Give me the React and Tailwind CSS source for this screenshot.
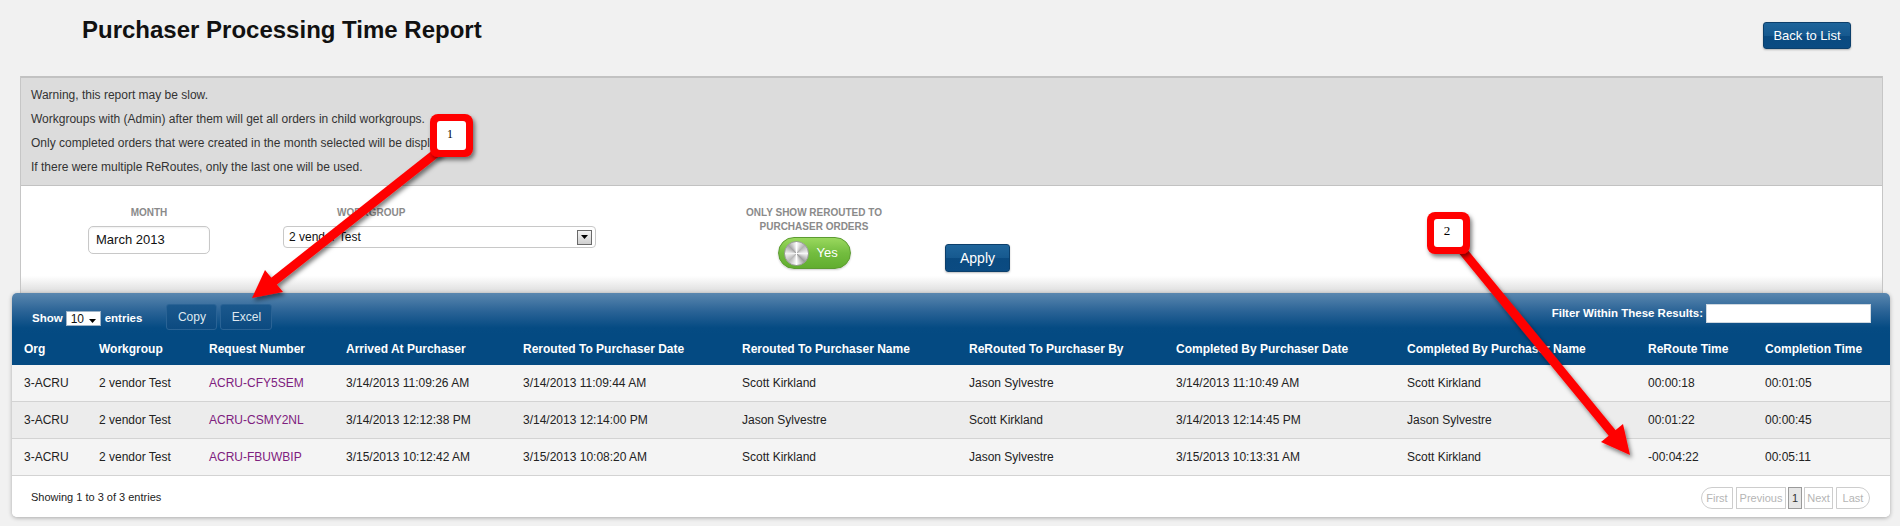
import React from 'react';

const cols = "grid grid-cols-[75px_110px_137px_177px_219px_227px_207px_231px_241px_117px_137px]";

const headers = [
  "Org",
  "Workgroup",
  "Request Number",
  "Arrived At Purchaser",
  "Rerouted To Purchaser Date",
  "Rerouted To Purchaser Name",
  "ReRouted To Purchaser By",
  "Completed By Purchaser Date",
  "Completed By Purchaser Name",
  "ReRoute Time",
  "Completion Time",
];

const rows = [
  ["3-ACRU", "2 vendor Test", "ACRU-CFY5SEM", "3/14/2013 11:09:26 AM", "3/14/2013 11:09:44 AM", "Scott Kirkland", "Jason Sylvestre", "3/14/2013 11:10:49 AM", "Scott Kirkland", "00:00:18", "00:01:05"],
  ["3-ACRU", "2 vendor Test", "ACRU-CSMY2NL", "3/14/2013 12:12:38 PM", "3/14/2013 12:14:00 PM", "Jason Sylvestre", "Scott Kirkland", "3/14/2013 12:14:45 PM", "Jason Sylvestre", "00:01:22", "00:00:45"],
  ["3-ACRU", "2 vendor Test", "ACRU-FBUWBIP", "3/15/2013 10:12:42 AM", "3/15/2013 10:08:20 AM", "Scott Kirkland", "Jason Sylvestre", "3/15/2013 10:13:31 AM", "Scott Kirkland", "-00:04:22", "00:05:11"],
];

const blueBtn =
  "flex items-center justify-center rounded-[3px] border border-[#0c3f6b] bg-[linear-gradient(180deg,#1f659b_0%,#16598f_50%,#0a4a80_52%,#0b4b82_100%)] text-white shadow-[0_1px_2px_rgba(0,0,0,0.25)]";

function Triangle({ className }) {
  return (
    <svg width="7" height="4" viewBox="0 0 7 4" className={className}>
      <polygon points="0,0 7,0 3.5,4" fill="#000" />
    </svg>
  );
}

function Annotations() {
  return (
    <svg className="absolute left-0 top-0 pointer-events-none" width="1900" height="526" viewBox="0 0 1900 526">
      <defs>
        <filter id="sh" x="-30%" y="-30%" width="160%" height="160%">
          <feDropShadow dx="2" dy="3" stdDeviation="2" floodColor="#000" floodOpacity="0.5" />
        </filter>
      </defs>
      {/* arrow 1 */}
      <g filter="url(#sh)">
        <line x1="440" y1="150" x2="273" y2="282" stroke="#ff0000" strokeWidth="9" />
        <polygon points="252,298 283,292 265,270" fill="#ff0000" />
      </g>
      {/* arrow 2 */}
      <g filter="url(#sh)">
        <line x1="1462" y1="250" x2="1613" y2="434" stroke="#ff0000" strokeWidth="9" />
        <polygon points="1630,455 1623,424 1601,442" fill="#ff0000" />
      </g>
      {/* callout 1 */}
      <g filter="url(#sh)">
        <rect x="430" y="114" width="43" height="43" rx="8" fill="#ff0000" />
        <rect x="437" y="121" width="29" height="29" rx="3" fill="#fff" />
      </g>
      <text x="450" y="137.5" textAnchor="middle" fontSize="12" fontFamily="'Liberation Serif', serif" fill="#000">1</text>
      {/* callout 2 */}
      <g filter="url(#sh)">
        <rect x="1427" y="212" width="43" height="42" rx="8" fill="#ff0000" />
        <rect x="1434" y="219" width="29" height="28" rx="3" fill="#fff" />
      </g>
      <text x="1447" y="235" textAnchor="middle" fontSize="13" fontFamily="'Liberation Serif', serif" fill="#000">2</text>
    </svg>
  );
}

export default function App() {
  return (
    <div className="relative w-[1900px] h-[526px] overflow-hidden bg-[#f1f1f1] font-['Liberation_Sans',Arial,sans-serif]">
      {/* page header */}
      <div className="flex justify-between h-[76px]">
        <h1 className="pl-[82px] pt-[16px] text-[24px] leading-[28px] font-bold text-[#111]">
          Purchaser Processing Time Report
        </h1>
        <button className={blueBtn + " mt-[22px] mr-[49px] w-[88px] h-[27px] text-[13px]"}>Back to List</button>
      </div>

      {/* info + filters */}
      <div className="ml-[20px] w-[1863px] border-x border-[#c6c6c6]">
        <div className="bg-[#dcdcdc] border-t-2 border-b border-[#c2c2c2] pt-[5px] pb-[6px] pl-[10px] text-[12px] leading-[24px] text-[#333]">
          <p>Warning, this report may be slow.</p>
          <p>Workgroups with (Admin) after them will get all orders in child workgroups.</p>
          <p>Only completed orders that were created in the month selected will be displayed.</p>
          <p>If there were multiple ReRoutes, only the last one will be used.</p>
        </div>

        <div className="h-[107px] flex items-start bg-[linear-gradient(180deg,#ffffff_0%,#ffffff_84%,#dcdcdc_100%)]">
          {/* month */}
          <div className="ml-[67px] w-[122px] pt-[21px] flex flex-col items-center">
            <div className="text-[10px] leading-[12px] font-bold text-[#8a8a8a]">MONTH</div>
            <div className="mt-[7px] w-[122px] h-[28px] rounded-[5px] border border-[#c8c8c8] bg-white flex items-center pl-[7px] text-[13px] text-[#111] shadow-[inset_0_1px_2px_rgba(0,0,0,0.06)]">
              March 2013
            </div>
          </div>

          {/* workgroup */}
          <div className="ml-[73px] w-[313px] pt-[21px]">
            <div className="pl-[54px] text-[10px] leading-[12px] font-bold text-[#8a8a8a]">WORKGROUP</div>
            <div className="mt-[7px] w-[313px] h-[22px] rounded-[4px] border border-[#c8c8c8] bg-white flex items-center justify-between pl-[5px] pr-[3px] text-[12px] text-[#111]">
              <span>2 vendor Test</span>
              <span className="w-[15px] h-[15px] border border-[#6a6a6a] bg-[linear-gradient(180deg,#f4f4f4,#cfcfcf)] flex items-center justify-center">
                <Triangle />
              </span>
            </div>
          </div>

          {/* reroute toggle */}
          <div className="ml-[143px] w-[150px] pt-[20px] flex flex-col items-center">
            <div className="text-center text-[10px] leading-[14px] font-bold text-[#8a8a8a]">
              ONLY SHOW REROUTED TO
              <br />
              PURCHASER ORDERS
            </div>
            <div className="mt-[3px] w-[73px] h-[32px] rounded-full border border-[#5c9b31] bg-[linear-gradient(180deg,#9ad85e_0%,#73bd3f_50%,#61ad2f_100%)] flex items-center pl-[5px] shadow-[0_1px_2px_rgba(0,0,0,0.2)]">
              <div className="w-[25px] h-[25px] rounded-full border border-[#9c9c9c] bg-[conic-gradient(#ffffff,#b2b2b2,#f6f6f6,#9d9d9d,#ffffff,#b8b8b8,#f2f2f2,#a4a4a4,#ffffff)]" />
              <span className="ml-[8px] text-[13px] text-white">Yes</span>
            </div>
          </div>

          {/* apply */}
          <button className={blueBtn + " ml-[56px] mt-[58px] w-[65px] h-[28px] text-[14px]"}>Apply</button>
        </div>
      </div>

      {/* results table */}
      <div className="ml-[12px] w-[1878px] rounded-[5px] overflow-hidden bg-white shadow-[0_1px_4px_rgba(0,0,0,0.3)]">
        <div className="h-[41px] flex items-start pt-[11px] pl-[20px] pr-[19px] bg-[linear-gradient(180deg,#5a87af_0%,#2a6396_45%,#054b83_85%,#044a82_100%)] text-white">
          <div className="mt-[7px] h-[15px] flex items-center text-[11.5px] font-bold">
            <span>Show</span>
            <span className="ml-[3px] w-[35px] h-[15px] bg-white border border-[#9fb4c8] flex items-center justify-between pl-[4px] pr-[4px] text-[12px] font-normal text-[#111]">
              10
              <Triangle className="mt-[4px]" />
            </span>
            <span className="ml-[4px]">entries</span>
          </div>
          <div className="ml-[24px] flex gap-[3px]">
            <button className="w-[51px] h-[26px] rounded-[3px] border border-[#2a6395] bg-[linear-gradient(180deg,#1b588c,#0c4a80)] text-[12px] text-[#dfe8f0]">Copy</button>
            <button className="w-[52px] h-[26px] rounded-[3px] border border-[#2a6395] bg-[linear-gradient(180deg,#1b588c,#0c4a80)] text-[12px] text-[#dfe8f0]">Excel</button>
          </div>
          <div className="flex-1" />
          <div className="flex items-center h-[19px]">
            <span className="text-[11.5px] font-bold">Filter Within These Results:</span>
            <span className="ml-[3px] w-[165px] h-[19px] bg-white border border-[#cfd8e0]" />
          </div>
        </div>

        <div className={cols + " h-[31px] bg-[#044a82] text-white text-[12px] font-bold leading-[31px]"}>
          {headers.map((h) => (
            <div key={h} className="pl-[12px] whitespace-nowrap">{h}</div>
          ))}
        </div>

        {rows.map((r, i) => (
          <div
            key={i}
            className={cols + " h-[37px] border-b border-[#d3d3d3] text-[12px] leading-[36px] text-[#222] " + (i % 2 === 1 ? "bg-[#ececec]" : "bg-[#f4f4f4]")}
          >
            {r.map((c, j) => (
              <div key={j} className={"pl-[12px] whitespace-nowrap " + (j === 2 ? "text-[#7e207e]" : "")}>{c}</div>
            ))}
          </div>
        ))}

        <div className="h-[41px] flex justify-between items-start bg-white">
          <div className="pl-[19px] pt-[15px] text-[11px] leading-[13px] text-[#222]">Showing 1 to 3 of 3 entries</div>
          <div className="mt-[11px] mr-[20px] flex items-center text-[11px] text-[#b5b5b5]">
            <span className="w-[32px] h-[22px] flex items-center justify-center border border-[#cdcdcd] rounded-l-full bg-white">First</span>
            <span className="ml-[3px] w-[50px] h-[22px] flex items-center justify-center border border-[#cdcdcd] bg-white">Previous</span>
            <span className="ml-[2px] w-[14px] h-[22px] flex items-center justify-center border border-[#9a9a9a] bg-[#e6e6e6] text-[#333]">1</span>
            <span className="ml-[2px] w-[29px] h-[22px] flex items-center justify-center border border-[#cdcdcd] bg-white">Next</span>
            <span className="ml-[3px] w-[34px] h-[22px] flex items-center justify-center border border-[#cdcdcd] rounded-r-full bg-white">Last</span>
          </div>
        </div>
      </div>

      <Annotations />
    </div>
  );
}
